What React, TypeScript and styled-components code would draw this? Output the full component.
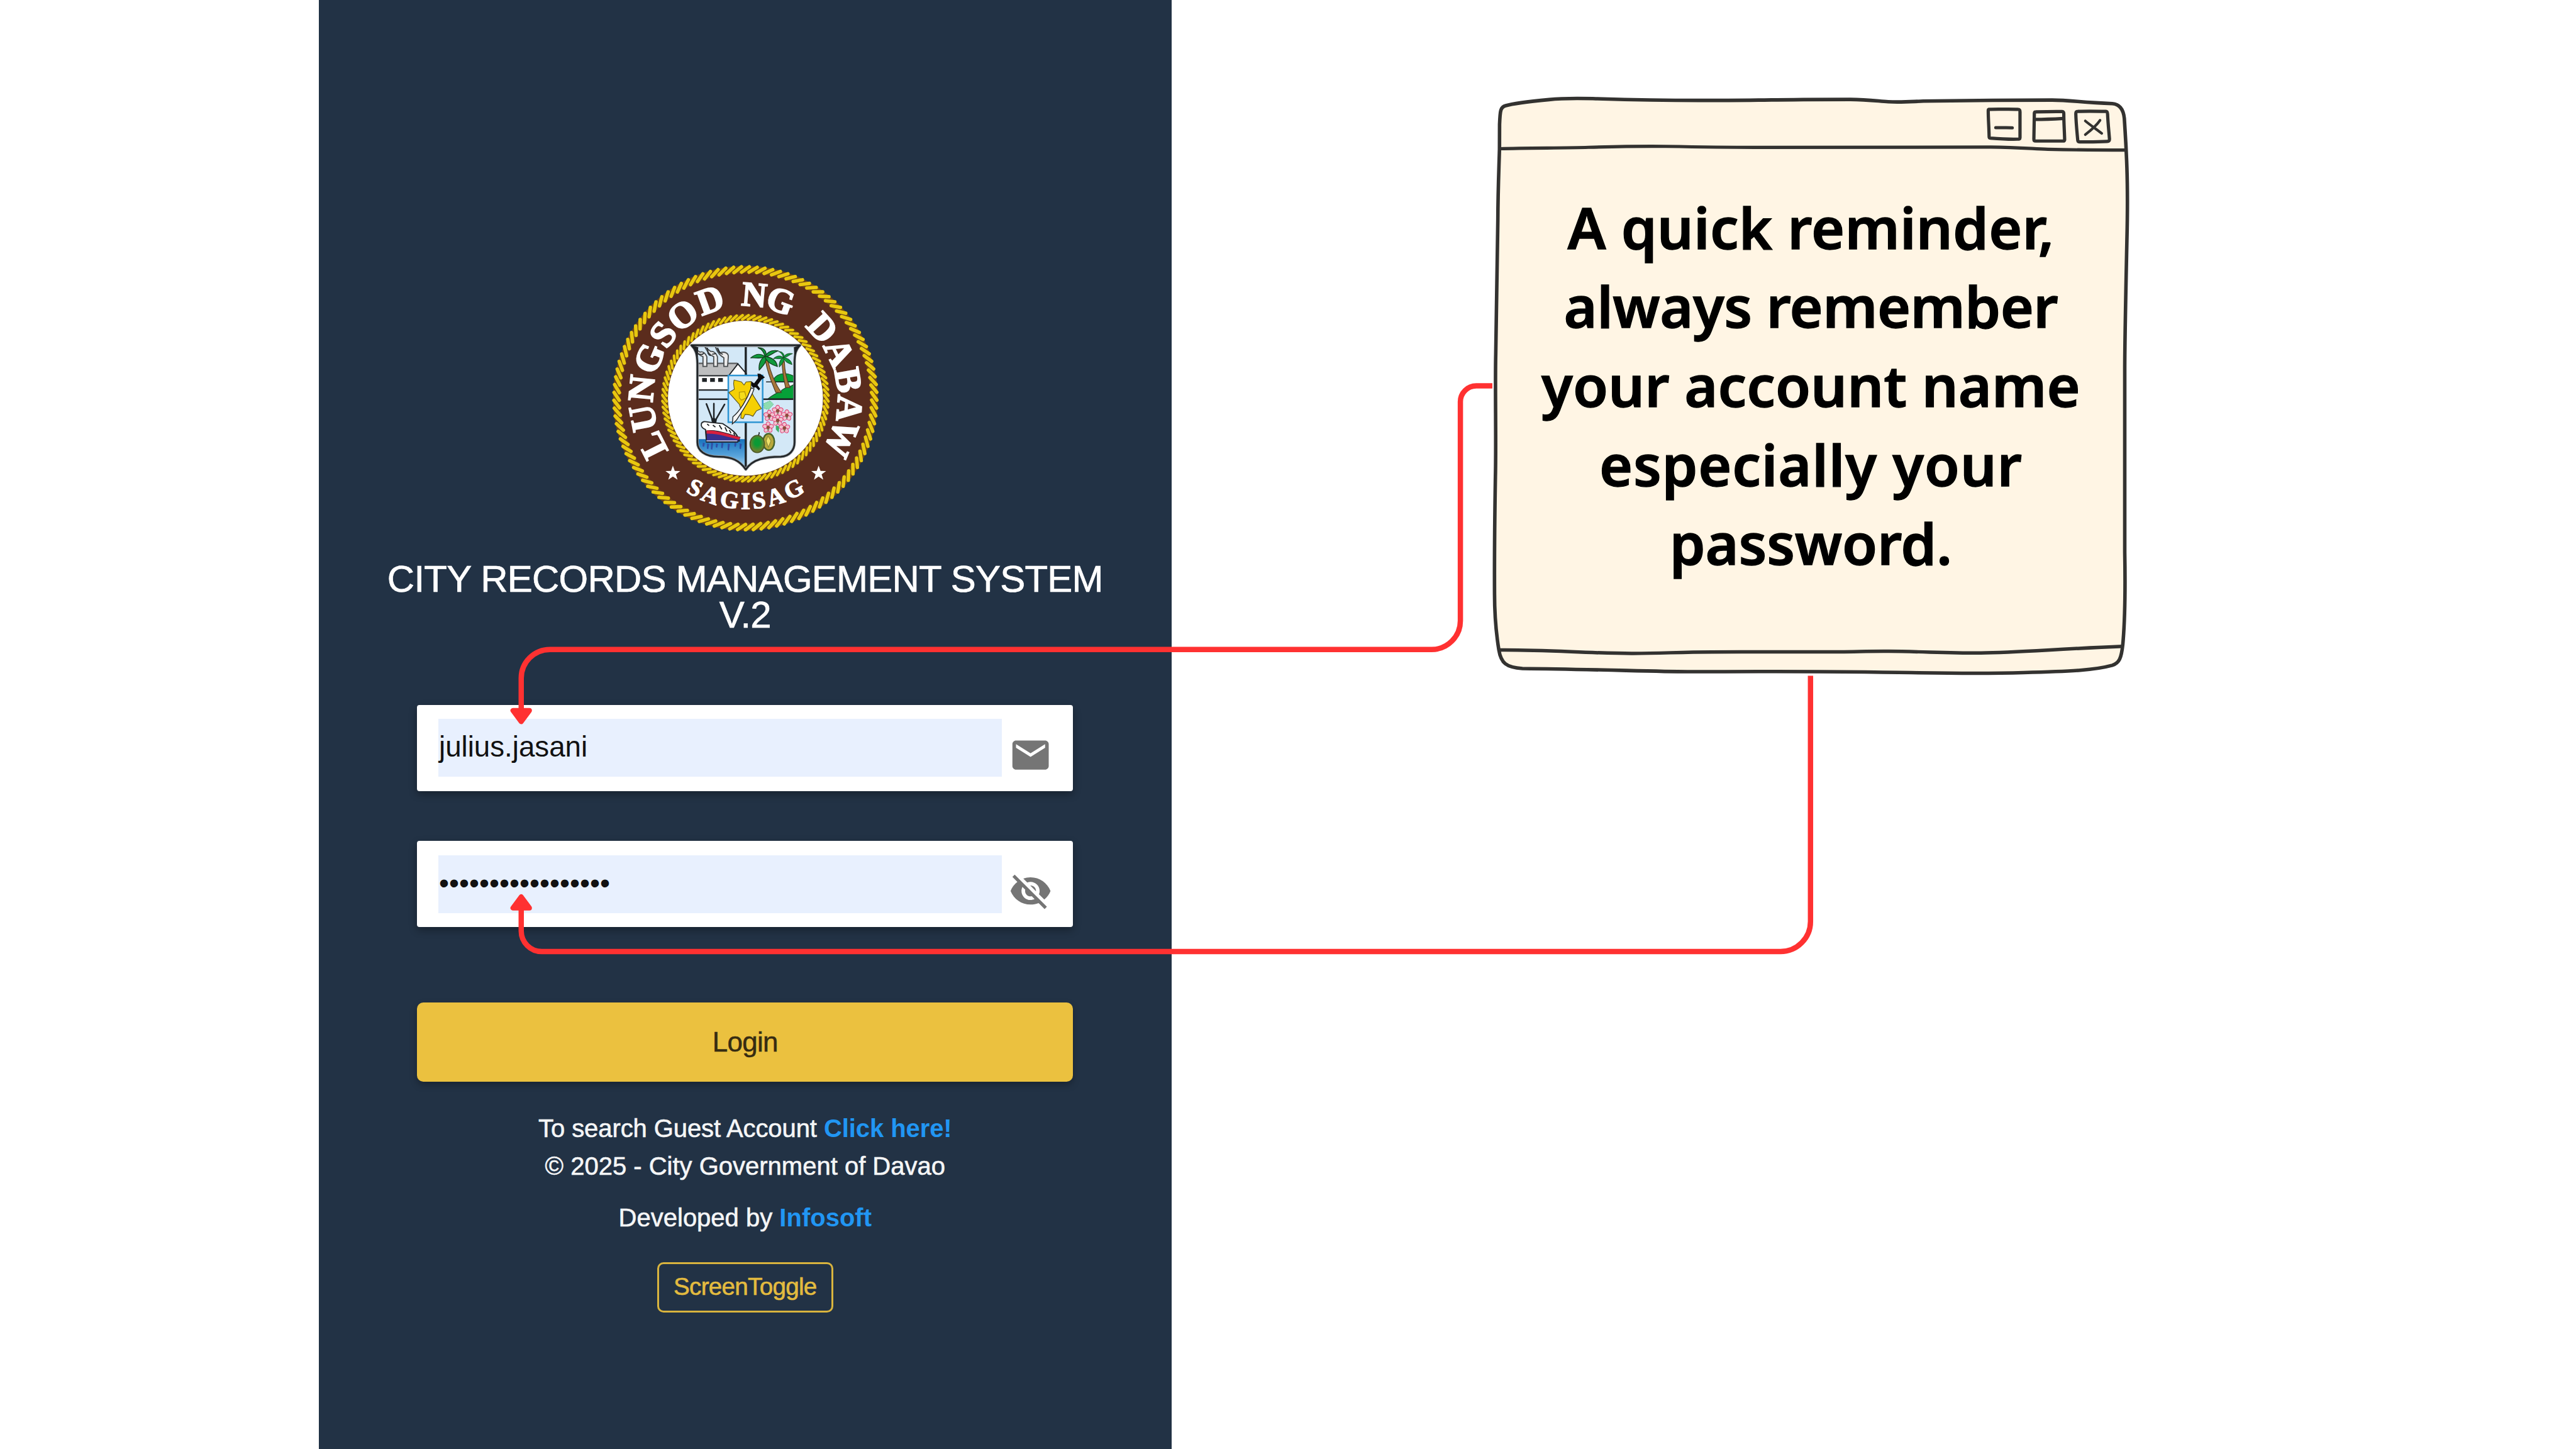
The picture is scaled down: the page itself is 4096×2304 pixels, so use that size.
import React from "react";
import styled, { createGlobalStyle } from "styled-components";
import { MdEmail, MdVisibilityOff } from "react-icons/md";

const GlobalStyle = createGlobalStyle`
  *, *::before, *::after { box-sizing: border-box; }
  html, body { margin: 0; padding: 0; background: #ffffff; }
`;

const sans = `"Liberation Sans", Arial, sans-serif`;

const Page = styled.div`
  position: relative;
  display: flex;
  align-items: flex-start;
  width: 4096px;
  height: 2304px;
  padding-left: 507px;
  overflow: hidden;
  background: #ffffff;
`;

const LoginPanel = styled.main`
  display: flex;
  flex-direction: column;
  align-items: center;
  flex: none;
  width: 1355.6px;
  height: 2304px;
  padding-top: 420.9px;
  background: #223245;
  font-family: ${sans};
`;

const SealDrawing = styled.svg`
  display: block;
  flex: none;
  width: 424.6px;
  height: 424.6px;
`;

const Title = styled.h1`
  margin: 46.4px 0 0;
  color: #ffffff;
  font-size: 60px;
  font-weight: 400;
  line-height: 57.1px;
  letter-spacing: -0.78px;
  text-align: center;
  -webkit-text-stroke: 0.7px currentColor;
`;

const Form = styled.div`
  display: flex;
  flex-direction: column;
  width: 1043.2px;
  margin-top: 114.5px;
`;

const Field = styled.div`
  display: flex;
  align-items: center;
  height: 137.3px;
  padding-left: 33.8px;
  border-radius: 4px;
  background: #ffffff;
  box-shadow: 0 5px 13px rgba(0, 0, 0, 0.32);

  & + & { margin-top: 79.1px; }
`;

const FieldValue = styled.div`
  width: 896px;
  height: 92px;
  padding-bottom: 3px;
  background: #e8f0fe;
  color: #111111;
  font-size: 45.7px;
  line-height: 89px;
  text-indent: 1px;
  white-space: nowrap;
`;

const FieldIcon = styled.span`
  display: flex;
  margin: 23px 0 0 10.9px;
  color: #757575;
  font-size: 69.3px;
`;

const LoginButton = styled.button`
  height: 126.6px;
  margin-top: 119.6px;
  padding: 0;
  border: 0;
  border-radius: 10px;
  background: #ebc13f;
  box-shadow: 0 5px 12px rgba(0, 0, 0, 0.28);
  color: #362c12;
  font-family: ${sans};
  font-size: 44px;
  letter-spacing: -0.7px;
  -webkit-text-stroke: 0.5px currentColor;
`;

const Footer = styled.footer`
  display: flex;
  flex-direction: column;
  align-items: center;
  margin-top: 43.4px;
  -webkit-text-stroke: 0.6px currentColor;
`;

const FooterLine = styled.p<{ $gap?: number; $tracking?: number }>`
  margin: ${(p) => p.$gap ?? 0}px 0 0;
  color: #f5f6f7;
  font-size: 40px;
  line-height: 60.2px;
  letter-spacing: ${(p) => p.$tracking ?? 0}px;
  white-space: nowrap;
`;

const FooterLink = styled.a`
  color: #2196f3;
  font-weight: 700;
  -webkit-text-stroke: 0;
`;

const ToggleButton = styled.button`
  width: 280px;
  height: 80.4px;
  margin-top: 40.5px;
  padding: 0 0 2px;
  border: 3px solid #d9b43e;
  border-radius: 10px;
  background: transparent;
  color: #e3bb3f;
  font-family: ${sans};
  font-size: 38.6px;
  letter-spacing: -0.7px;
  -webkit-text-stroke: 0.6px currentColor;
`;

const NoteWindow = styled.aside`
  position: relative;
  flex: none;
  width: 1013px;
  height: 924px;
  margin: 151.5px 0 0 510.3px;
  padding-top: 147px;
`;

const NoteFrame = styled.svg`
  position: absolute;
  inset: 0;
  width: 1013px;
  height: 924px;
`;

const NoteText = styled.p`
  position: relative;
  display: flex;
  flex-direction: column;
  align-items: center;
  margin: 0;
  color: #000000;
  font-family: "Noto Sans", "Open Sans", sans-serif;
  font-size: 91px;
  font-weight: 600;
  line-height: 125.7px;
  white-space: nowrap;
  -webkit-text-stroke: 1.3px currentColor;
`;

const NoteLine = styled.span<{ $tracking: number }>`
  display: block;
  letter-spacing: ${(p) => p.$tracking}px;
`;

const Connectors = styled.svg`
  position: absolute;
  inset: 0;
  width: 4096px;
  height: 2304px;
  pointer-events: none;
`;

const BROWN = "#5b2c1d";
const ROPE = "#e8c70f";
const INK = "#1f2326";

function Rope({ radius, count, reach, width }: { radius: number; count: number; reach: number; width: number }) {
  return (
    <g stroke={ROPE} strokeWidth={width} strokeLinecap="round">
      {Array.from({ length: count }, (_, i) => (
        <line
          key={i}
          x1={-reach * 1.1}
          y1={-radius + reach * 0.75}
          x2={reach * 1.1}
          y2={-radius - reach * 0.75}
          transform={`rotate(${(360 / count) * i})`}
        />
      ))}
    </g>
  );
}

const STAR = "M0 -18 L4.4 -5.8 L17.3 -5.6 L7 2.2 L10.8 14.6 L0 7.2 L-10.8 14.6 L-7 2.2 L-17.3 -5.6 L-4.4 -5.8 Z";

const SHIELD =
  "M90 132 H850 C820 160 811 190 811 260 V810 C811 865 775 908 715 911 C610 912 520 925 470 1000 C425 935 370 912 285 911 C180 912 132 865 132 810 V260 C130 190 120 160 90 132 Z";

function Palm({ x, y, s }: { x: number; y: number; s: number }) {
  return (
    <g transform={`translate(${x} ${y}) scale(${s})`} fill="#0f9a3c" stroke="#15401f" strokeWidth="6" strokeLinejoin="round">
      <path d="M0 0 C-10 -30 -20 -50 -50 -62 C-10 -62 8 -40 8 -8 Z" />
      <path d="M0 0 C-30 -22 -60 -25 -102 10 C-60 8 -40 18 0 4 Z" />
      <path d="M0 0 C15 -30 40 -48 94 -40 C70 -35 45 -8 4 4 Z" />
      <path d="M0 0 C-30 15 -48 50 -42 98 C-20 70 10 50 8 4 Z" />
      <path d="M0 0 C35 5 80 20 88 72 C60 62 20 50 0 8 Z" />
    </g>
  );
}

function Flower({ x, y }: { x: number; y: number }) {
  return (
    <g transform={`translate(${x} ${y})`}>
      {[0, 72, 144, 216, 288].map((a) => (
        <ellipse key={a} cx="0" cy="-21" rx="14" ry="18" transform={`rotate(${a})`} fill="#f3c3d0" stroke="#e0457a" strokeWidth="5" />
      ))}
      <circle r="12" fill="#8d4a3c" />
      <path d="M-6 10 L0 22 L6 10" stroke="#3b7a48" strokeWidth="4" fill="none" />
    </g>
  );
}

function CitySeal() {
  return (
    <SealDrawing viewBox="-311 -311 622 622" role="img" aria-label="Lungsod ng Dabaw">
      <defs>
        <path id="seal-top" d="M0 215 A215 215 0 0 1 0 -215 A215 215 0 0 1 0 215" />
        <path id="seal-bottom" d="M-258 0 A258 258 0 0 0 258 0" />
        <clipPath id="shield-clip"><path d={SHIELD} /></clipPath>
        <linearGradient id="sea" x1="0" y1="0" x2="0" y2="1">
          <stop offset="0" stopColor="#1873bd" />
          <stop offset="0.55" stopColor="#5ba6dc" />
          <stop offset="1" stopColor="#c3e0f4" />
        </linearGradient>
        <radialGradient id="fruit" cx="0.5" cy="0.42" r="0.6">
          <stop offset="0.3" stopColor="#0a9a35" />
          <stop offset="1" stopColor="#8a7a2c" />
        </radialGradient>
      </defs>

      <circle r="308" fill={BROWN} />
      <circle r="300" fill="none" stroke="#6b4415" strokeWidth="17" />
      <Rope radius={300} count={105} reach={8.2} width={8.2} />
      <circle r="188.5" fill="#ffffff" stroke="#6b4415" strokeWidth="16" />
      <Rope radius={188.5} count={88} reach={6.6} width={6.2} />

      <g fill="#ffffff" fontFamily={`"Liberation Serif", "Times New Roman", serif`} fontWeight="700" fontSize="85" textAnchor="middle" stroke="#ffffff" strokeWidth="3">
        <text textLength="423"><textPath href="#seal-top" startOffset="420" textLength="423">LUNGSOD</textPath></text>
        <text fontSize="81" textLength="117"><textPath href="#seal-top" startOffset="723" textLength="117">NG</textPath></text>
        <text textLength="318"><textPath href="#seal-top" startOffset="982" textLength="318">DABAW</textPath></text>
        <text fontSize="56" strokeWidth="1.8" textLength="296"><textPath href="#seal-bottom" startOffset="405.3" textLength="296">SAGISAG</textPath></text>
      </g>
      <path d={STAR} fill="#ffffff" transform="translate(-169 175)" />
      <path d={STAR} fill="#ffffff" transform="translate(170.5 175)" />

      <g transform="translate(-155.9 -167.5) scale(0.33333)">
        <path d={SHIELD} fill="#d3e8f7" />
        <g clipPath="url(#shield-clip)">
          <rect x="125" y="788" width="345" height="220" fill="url(#sea)" />
          <g fill="#2f4ea6">
            {[170, 200, 228, 262, 300, 345, 392, 428].map((x, i) => (
              <path key={x} d={`M${x} ${812 + (i % 2) * 6} l14 4 l-6 ${26 + (i % 3) * 10} l-10 -4 Z`} />
            ))}
          </g>

          <g stroke={INK} strokeWidth="8" strokeLinejoin="round">
            <path d="M130 345 H350 V445 H130 Z" fill="#ffffff" />
            <path d="M130 260 H415 L362 345 H130 Z" fill="#bdbebf" />
            <path d="M415 262 L350 345 H474 V330 Z" fill="#ffffff" />
          </g>
          <path d="M140 258 H410" stroke="#6f7274" strokeWidth="10" />
          <g fill={INK}>
            <rect x="165" y="361" width="33" height="27" />
            <rect x="221" y="361" width="33" height="27" />
            <rect x="277" y="361" width="33" height="27" />
          </g>
          <g fill="#ececec" stroke="#4a4e50" strokeWidth="8">
            <path d="M171 280 V212 C150 205 135 195 120 160 L150 180 C170 172 190 190 198 212 V280 Z" />
            <path d="M246 280 V212 C225 205 205 185 185 145 L225 175 C245 172 266 190 272 212 V280 Z" />
            <path d="M317 280 V220 C295 205 275 190 258 145 L290 185 C325 172 350 190 348 212 L343 280 Z" />
          </g>
          <g fill="none" stroke={INK} strokeWidth="7">
            <path d="M125 205 C140 175 160 215 178 185 M200 150 C215 170 190 190 225 205 M235 195 L262 190 M272 150 C285 165 280 190 310 195" />
          </g>

          <path d="M655 388 C670 345 710 328 745 330 C780 332 800 345 812 352 V388 Z" fill="#06a038" stroke="#1c4a28" strokeWidth="5" />
          <path d="M612 388 H812" stroke={INK} strokeWidth="6" />
          <path d="M700 398 H812 V400 L760 440 L690 440 Z" fill="#eef3f5" />
          <path d="M625 506 C670 470 690 465 715 455 C730 425 775 430 812 402 V506 Z" fill="#06a038" stroke="#1c4a28" strokeWidth="5" />
          <path d="M608 240 C622 330 655 400 680 462 H718 C675 400 645 330 624 236 Z" fill="#a8763a" stroke="#4c3a25" strokeWidth="5" />
          <path d="M724 245 C724 320 738 380 748 428 H780 C755 375 742 310 740 245 Z" fill="#a8763a" stroke="#4c3a25" strokeWidth="5" />
          <Palm x={605} y={210} s={0.98} />
          <Palm x={733} y={218} s={0.68} />

          <path d="M596 540 L640 520 L664 545 L630 580 L600 575 Z" fill="#8fdcb1" stroke="#39b873" strokeWidth="4" strokeDasharray="7 6" />
          <path d="M680 690 L705 700 L700 742 L680 720 Z" fill="#3fae6a" />
          <Flower x={693} y={590} />
          <Flower x={634} y={624} />
          <Flower x={757} y={622} />
          <Flower x={693} y={657} />
          <Flower x={626} y={706} />
          <Flower x={740} y={710} />
          <ellipse cx="630" cy="807" rx="40" ry="58" fill="#b9a93c" stroke="#47642c" strokeWidth="11" />
          <path d="M625 765 L612 800 L628 845 L646 800 Z" fill="#f0e36a" stroke="#8a8a3c" strokeWidth="5" />
          <path d="M555 765 C565 755 566 750 563 740" stroke={INK} strokeWidth="7" fill="none" />
          <ellipse cx="550" cy="822" rx="50" ry="60" fill="url(#fruit)" stroke="#4c5c2a" strokeWidth="8" />

          <g stroke={INK} strokeLinecap="round">
            <path d="M195 542 L240 660 M247 540 V655 M322 545 L256 660" strokeWidth="11" />
          </g>
          <path d="M228 645 L248 640 L268 650 L262 685 H236 Z" fill={INK} />
          <path d="M160 680 C170 655 200 670 235 672 L310 680 C345 705 400 735 412 770 L425 800 H195 L188 720 C170 715 155 700 160 680 Z" fill="#ffffff" stroke={INK} strokeWidth="8" />
          <path d="M195 730 C260 718 340 750 430 775 L415 808 H195 Z" fill="#38308f" stroke={INK} strokeWidth="5" />
          <path d="M196 728 C265 724 340 752 432 776 L422 792 C350 775 280 748 196 750 Z" fill="#d8203d" />
          <path d="M200 682 l14 12 M240 690 l18 14 M285 690 l18 30 M325 705 l14 30 M355 725 l12 22 M385 745 l8 16" stroke={INK} strokeWidth="8" />
          <path d="M195 800 H410" stroke="#cfd3e8" strokeWidth="7" />
          <path d="M190 808 H415" stroke={INK} strokeWidth="6" />
        </g>

        <path d="M132 445 H350" stroke={INK} strokeWidth="9" />
        <path d="M132 509 H812" stroke={INK} strokeWidth="11" />
        <path d="M470 132 V1000" stroke={INK} strokeWidth="15" />
        <path d={SHIELD} fill="none" stroke="#8e9498" strokeWidth="19" strokeLinejoin="round" />
        <path d={SHIELD} fill="none" stroke={INK} strokeWidth="11" strokeLinejoin="round" />
        <path d="M90 132 L138 145 L134 215 L118 165 Z M850 132 L806 145 L810 215 L822 165 Z" fill={INK} />
        <path d="M135 142 H806" stroke="#8e9498" strokeWidth="6" />

        <rect x="348" y="343" width="240" height="327" fill="#d3e8f7" stroke="#2d95d3" strokeWidth="11" />
        <path d="M388 375 L440 388 L458 410 L472 388 L508 385 L505 430 L520 480 L580 575 L545 590 L520 628 L495 618 L465 615 L452 645 L435 640 L440 590 L425 545 L352 462 L390 440 L385 400 Z" fill="#f5d005" stroke="#5c5520" strokeWidth="5" strokeLinejoin="round" />
        <path d="M425 460 L462 455 L475 500 L440 515 L425 500 Z" fill="#f5dc1a" stroke="#b89a08" strokeWidth="6" />
        <path d="M508 430 L528 436 C505 510 440 600 405 655 L376 682 L380 632 C430 590 480 510 508 430 Z" fill="#f4f4f4" stroke={INK} strokeWidth="6" />
        <path d="M552 330 L572 332 L604 356 L580 372 L552 410 L570 435 L562 448 L540 425 L522 430 L508 412 L510 385 L528 398 L556 362 Z" fill="#0c0d0f" />
      </g>
    </SealDrawing>
  );
}

function ReminderFrame() {
  return (
    <NoteFrame viewBox="3476 222 1484 1353.6" fill="none" stroke="#333230" strokeWidth="8.2" strokeLinejoin="round" strokeLinecap="round" aria-hidden="true">
      <path
        fill="#fff5e4"
        d="M3492.5 347 L3492.7 289 C3494 255 3495 249 3507 245.5 C3525 240 3580 234 3608 231.3 C3640 227.8 3670 228 3710 229 C3790 231.5 3880 233.2 3957 233.2 C4050 233.4 4130 231.8 4200 231.3 L4310 231 C4350 231.6 4372 234.6 4398 236.3 C4425 238 4440 236.6 4480 234.8 C4540 233.4 4700 232.6 4780 232.4 C4822 232.6 4848 238 4920 240.6 C4938 242 4946 255 4948 275 C4950 310 4952 330 4954 390 C4956 450 4955.5 500 4954 560 C4951 700 4949 800 4949 860 L4949 1286 C4950.5 1370 4950 1440 4944.5 1500 C4941 1533 4936 1544 4920 1549 C4880 1560 4830 1563 4713 1566 C4590 1570 4490 1566 4365 1565 C4240 1562.5 4030 1563.5 3930 1564 C3850 1563.5 3700 1558 3546 1556.5 C3508 1554 3496 1544 3491 1513 C3484 1470 3481 1430 3481 1383 C3480.5 1290 3481.5 1200 3483 1110 C3485 1030 3482 900 3483.8 825 L3488.7 512.5 C3489 440 3491 400 3492.5 347 Z"
      />
      <path strokeWidth="7.6" d="M3493 345.8 C3560 343.5 3640 344.5 3700 342.5 C3770 340.5 3810 339.5 3880 340.3 C3950 341.5 4010 342.5 4087 342.6 C4300 342.2 4500 342 4637 342 C4700 343 4730 345.5 4770 347 C4840 348.8 4900 349 4950 349" />
      <path strokeWidth="8" strokeLinecap="butt" d="M3491 1513.5 C3600 1512.5 3700 1521.3 3800 1521.3 C3870 1521.5 3910 1518 3987 1518 C4090 1517.5 4200 1518 4285 1517.8 C4330 1517.5 4350 1516 4400 1516.4 C4480 1517 4530 1520.5 4614 1520.3 C4700 1519.5 4790 1511 4944 1505" />
      <g strokeWidth="7.6" fill="#fff5e4">
        <path d="M4633 254 C4655 254 4680 253 4700 254 C4704 254 4705 255 4705 260 L4705 320 C4705 323 4703 323.5 4699 323.4 C4680 324 4655 322.5 4636 321 C4633 321 4633 319 4633 315 C4632.6 295 4631 275 4631 257 C4631 255 4631.4 254 4633 254 Z" />
        <path d="M4742 260 C4760 259.4 4785 258.8 4803 259.2 C4806 259.4 4807 261 4807 264 C4807 285 4808.5 305 4809 325 C4809 327 4808 328 4805 327.8 L4742 327.8 C4738 328 4737.3 327 4737.3 323 C4737.6 305 4738 285 4738.4 263 C4738.6 261 4739.4 260 4742 260 Z" />
        <path d="M4740 277.6 C4762 277.6 4785 276.6 4806 275.4" />
        <path d="M4840 258.8 C4860 258 4885 258.4 4905 258.8 C4908 259 4908.8 261 4909 265 C4909.8 285 4912 305 4913.4 323 C4913.6 327 4912 328.6 4908 328.8 C4888 330 4865 330 4844 329.8 C4840.8 329.8 4839.6 328.6 4839.4 325 C4837.6 305 4835.4 285 4835 264 C4835 260.4 4836 258.8 4840 258.8 Z" />
      </g>
      <path strokeWidth="7.4" d="M4648.5 296.8 C4660 296.4 4675 297 4687 297" />
      <path strokeWidth="6" d="M4857 281 C4865 288 4885 302 4895.500 310 M4891.500 279.500 C4883 292 4870 303 4857 313" />
    </NoteFrame>
  );
}

function ReminderConnectors() {
  return (
    <Connectors viewBox="0 0 6000 3375" fill="none" stroke="#ff3131" strokeWidth="12.4" aria-hidden="true">
      <path d="M3476 898.7 H3438.500 A37 37 0 0 0 3401.500 935.700 V1445.700 A67 67 0 0 1 3334.500 1512.700 H1281 A67 67 0 0 0 1214 1579.700 V1655" />
      <path d="M4217 1574 V2146.300 A70 70 0 0 1 4147 2216.300 H1262 A48 48 0 0 1 1214 2168.300 V2115" />
      <g fill="#ff3131" strokeWidth="12" strokeLinejoin="round">
        <path d="M1195 1655 H1233 L1214 1680.500 Z" />
        <path d="M1195 2114.700 H1233 L1214 2089 Z" />
      </g>
    </Connectors>
  );
}

export default function App() {
  return (
    <>
      <GlobalStyle />
      <Page>
        <LoginPanel>
          <CitySeal />
          <Title>
            CITY RECORDS MANAGEMENT SYSTEM
            <br />
            V.2
          </Title>
          <Form>
            <Field>
              <FieldValue>julius.jasani</FieldValue>
              <FieldIcon><MdEmail /></FieldIcon>
            </Field>
            <Field>
              <FieldValue>{"•".repeat(17)}</FieldValue>
              <FieldIcon><MdVisibilityOff /></FieldIcon>
            </Field>
            <LoginButton type="button">Login</LoginButton>
          </Form>
          <Footer>
            <FooterLine $tracking={-0.08}>
              To search Guest Account <FooterLink>Click here!</FooterLink>
            </FooterLine>
            <FooterLine>© 2025 - City Government of Davao</FooterLine>
            <FooterLine $gap={22}>
              Developed by <FooterLink>Infosoft</FooterLink>
            </FooterLine>
            <ToggleButton type="button">ScreenToggle</ToggleButton>
          </Footer>
        </LoginPanel>
        <NoteWindow>
          <ReminderFrame />
          <NoteText>
            <NoteLine $tracking={0.15}>A quick reminder,</NoteLine>
            <NoteLine $tracking={-0.6}>always remember</NoteLine>
            <NoteLine $tracking={0}>your account name</NoteLine>
            <NoteLine $tracking={0.75}>especially your</NoteLine>
            <NoteLine $tracking={-0.25}>password.</NoteLine>
          </NoteText>
        </NoteWindow>
        <ReminderConnectors />
      </Page>
    </>
  );
}
